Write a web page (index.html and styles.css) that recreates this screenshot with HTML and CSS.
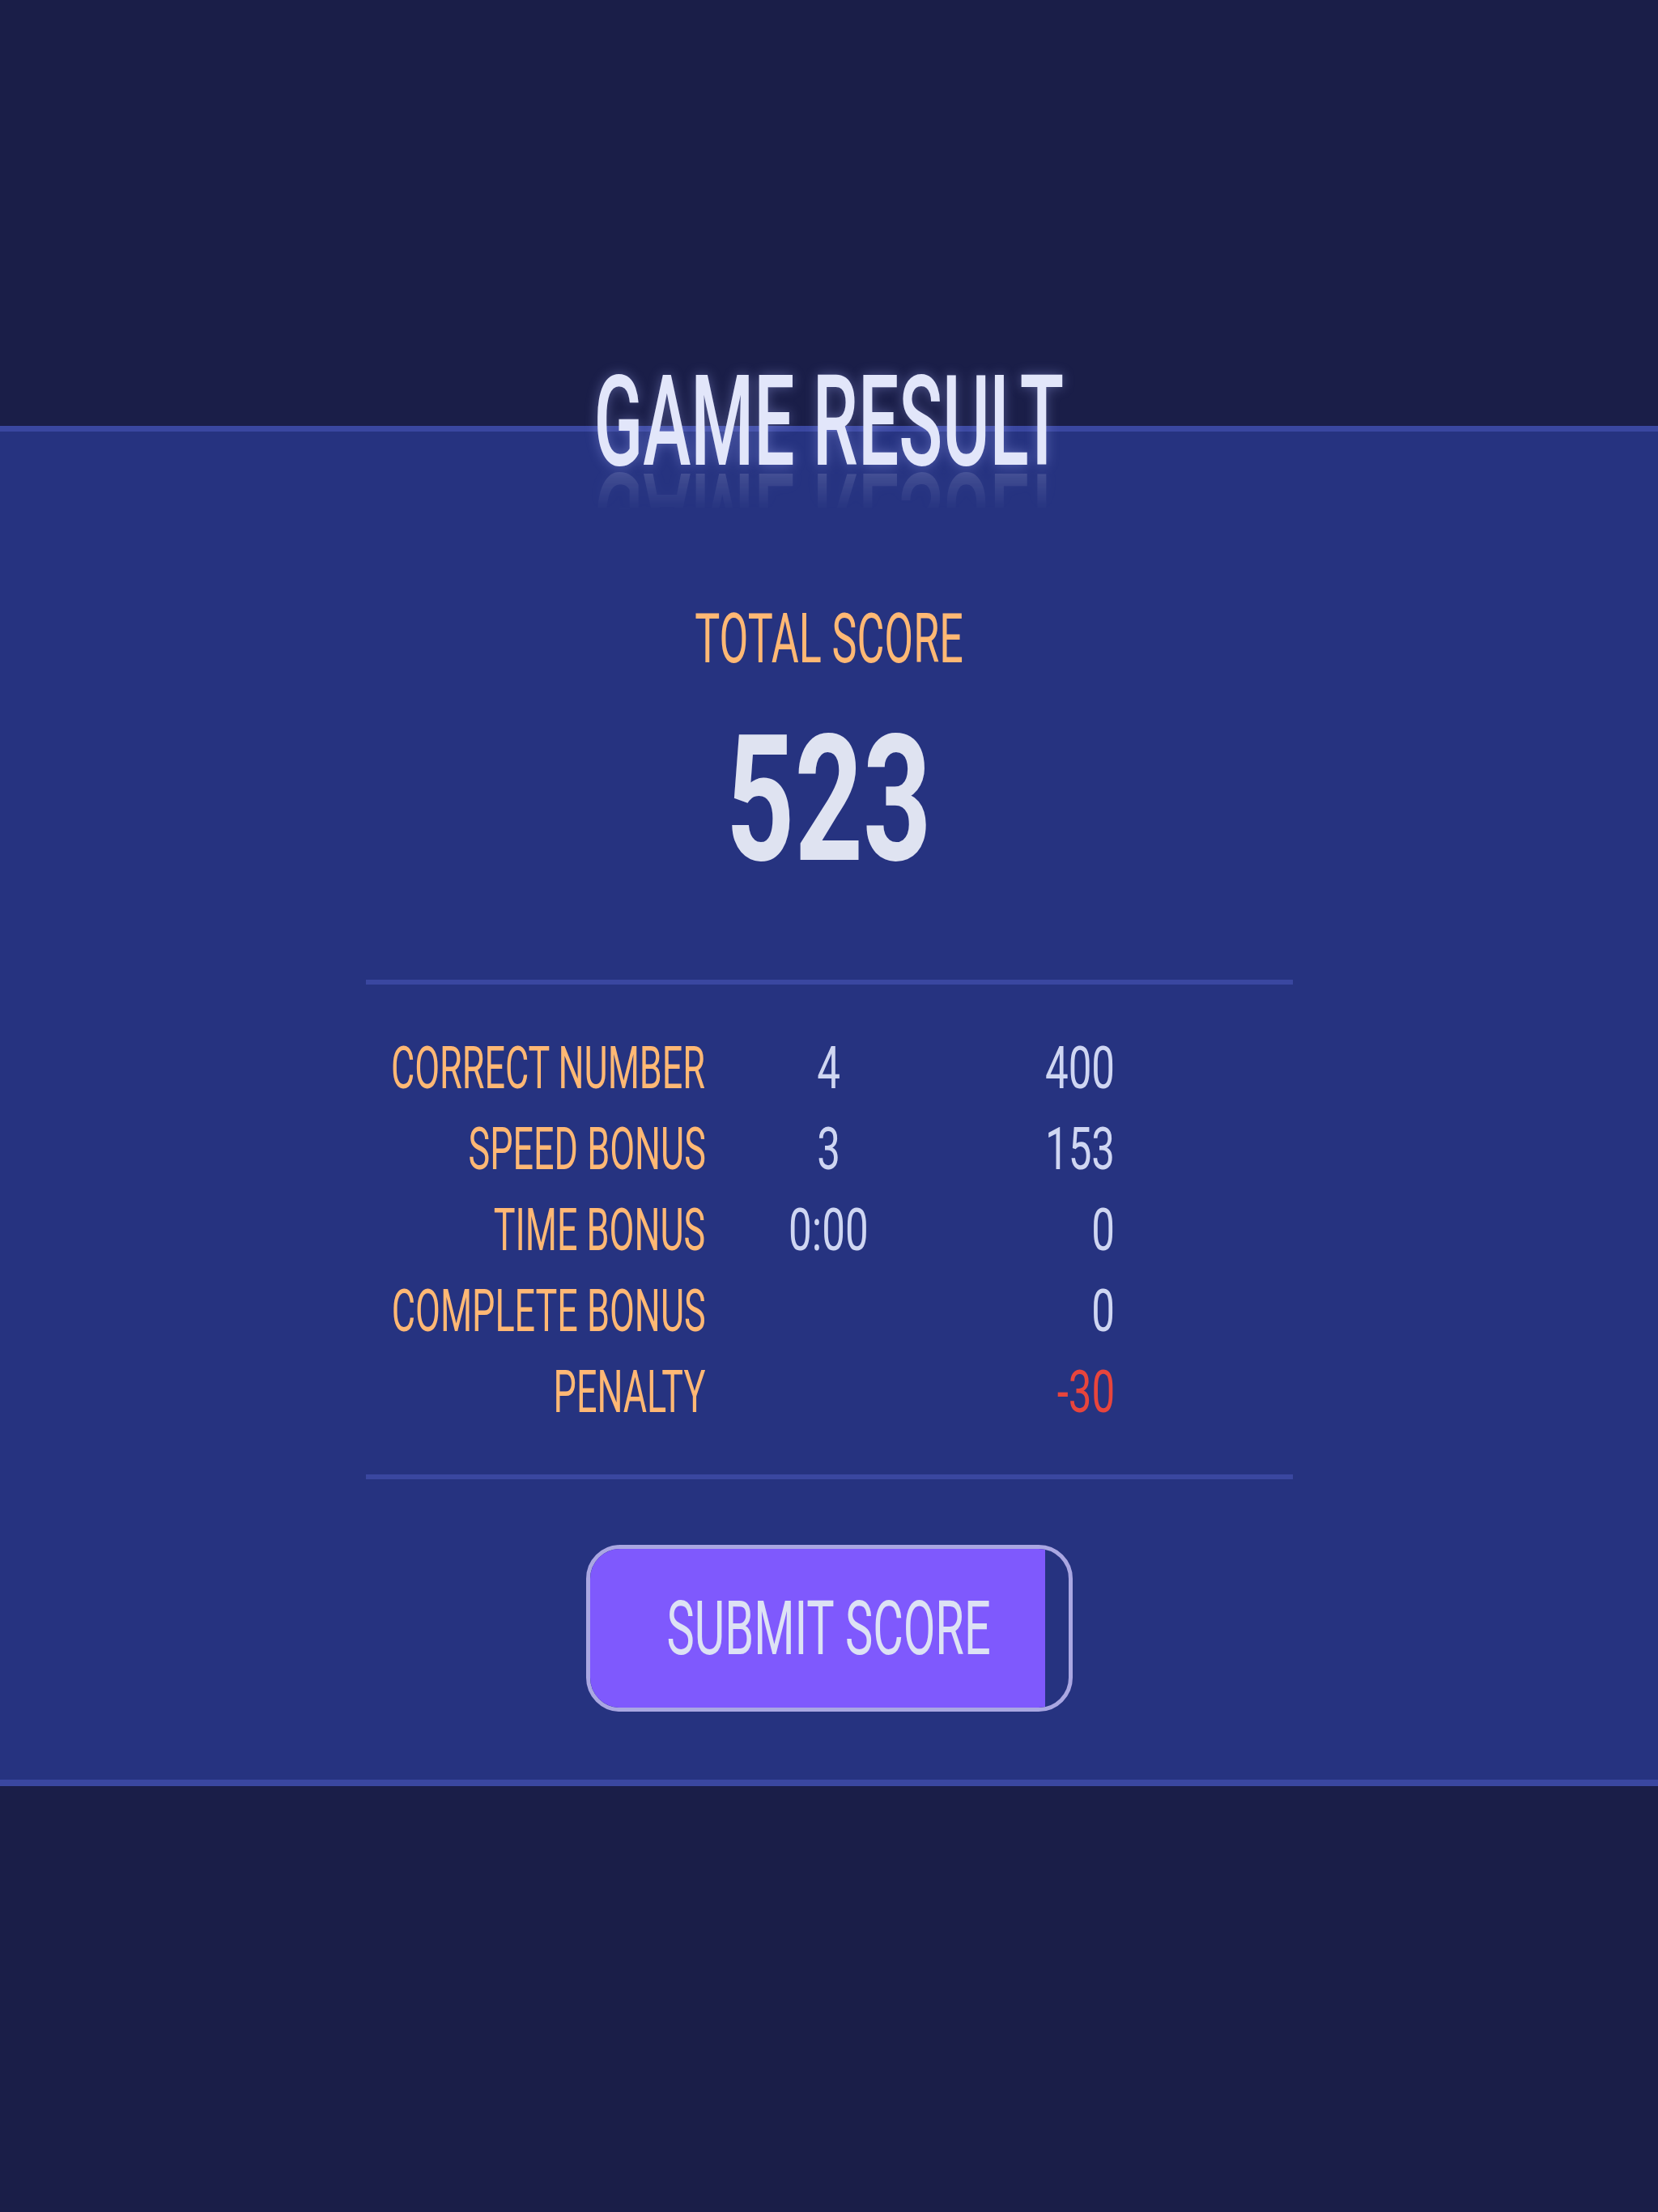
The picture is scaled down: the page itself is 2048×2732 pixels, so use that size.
FILE: index.html
```html
<!DOCTYPE html>
<html lang="en">
<head>
    <meta charset="UTF-8">
    <meta name="viewport" content="width=device-width, initial-scale=1.0">
    <title>Game Result</title>
    <link rel="stylesheet" href="styles.css">
</head>
<body>

    <section class="panel">
        <h1 class="title"><span class="squeeze">GAME RESULT</span></h1>

        <p class="total-label"><span class="squeeze">TOTAL SCORE</span></p>
        <p class="total-value"><span class="squeeze">523</span></p>

        <div class="breakdown">
            <div class="row">
                <span class="label"><span class="squeeze">CORRECT NUMBER</span></span>
                <span class="count"><span class="squeeze">4</span></span>
                <span class="points"><span class="squeeze">400</span></span>
            </div>
            <div class="row">
                <span class="label"><span class="squeeze">SPEED BONUS</span></span>
                <span class="count"><span class="squeeze">3</span></span>
                <span class="points"><span class="squeeze">153</span></span>
            </div>
            <div class="row">
                <span class="label"><span class="squeeze">TIME BONUS</span></span>
                <span class="count"><span class="squeeze">0:00</span></span>
                <span class="points"><span class="squeeze">0</span></span>
            </div>
            <div class="row">
                <span class="label"><span class="squeeze">COMPLETE BONUS</span></span>
                <span class="count"></span>
                <span class="points"><span class="squeeze">0</span></span>
            </div>
            <div class="row">
                <span class="label"><span class="squeeze">PENALTY</span></span>
                <span class="count"></span>
                <span class="points negative"><span class="squeeze">-30</span></span>
            </div>
        </div>

        <button type="button" class="submit">
            <span class="submit-fill"></span>
            <span class="submit-text"><span class="squeeze">SUBMIT SCORE</span></span>
        </button>
    </section>

</body>
</html>
```

FILE: styles.css
```css
body {
    font-family: Roboto, "Liberation Sans", sans-serif;
    margin: 0;
    padding: 0;
    display: flex;
    align-items: center;
    height: 100vh;
    background-color: #1a1e48;
}

/* condensed look: the display font is narrow, so squash a normal one */
.squeeze {
    display: inline-block;
    flex: none;
    transform: scaleX(0.61);
    white-space: nowrap;
}

.panel {
    width: 100%;
    box-sizing: border-box;
    background-color: #263380;
    border-top: 7px solid #3a47a0;
    border-bottom: 8px solid #3a47a0;
    padding-bottom: 84px;
    text-align: center;
}

.title {
    margin: -89px 0 0;
    font-size: 155px;
    line-height: 155px;
    font-weight: 500;
    color: #e2e6fa;
    text-shadow: 0 0 20px rgba(170, 180, 255, 0.38);
    -webkit-box-reflect: below -39px linear-gradient(transparent 55%, rgba(255, 255, 255, 0.24));
}

.title .squeeze {
    transform: scaleX(0.575);
}

.total-label {
    margin: 147px 0 0;
    font-size: 86px;
    line-height: 86px;
    font-weight: 400;
    color: #ffb874;
}

.total-label .squeeze {
    transform: scaleX(0.605);
}

.total-value {
    margin: 48px 0 0;
    font-size: 217px;
    line-height: 217px;
    font-weight: 700;
    color: #dfe3f1;
}

.total-value .squeeze {
    transform: scaleX(0.68);
}

.breakdown {
    width: 1145px;
    margin: 113px auto 0;
    padding: 53px 0 52px;
    border-top: 6px solid #3a47a0;
    border-bottom: 6px solid #3a47a0;
}

.row {
    display: grid;
    grid-template-columns: 420px 304px 202px 1fr;
    height: 100px;
    font-size: 73px;
    line-height: 100px;
    font-weight: 400;
}

.label,
.count,
.points {
    display: flex;
    min-width: 0;
}

.label {
    justify-content: flex-end;
    color: #ffb874;
}

.label .squeeze {
    transform: scaleX(0.615);
    transform-origin: right center;
}

.count {
    justify-content: center;
    color: #cfd6f2;
}

.count .squeeze {
    transform: scaleX(0.7);
}

.points {
    justify-content: flex-end;
    color: #cfd6f2;
}

.points .squeeze {
    transform: scaleX(0.7);
    transform-origin: right center;
}

.points.negative {
    color: #e8453c;
}

.submit {
    display: grid;
    width: 601px;
    height: 206px;
    margin: 81px auto 0;
    padding: 0;
    box-sizing: border-box;
    border: 5px solid #aaa7e2;
    border-radius: 42px;
    overflow: hidden;
    background-color: transparent;
    font-family: inherit;
    cursor: pointer;
}

.submit-fill {
    grid-area: 1 / 1;
    width: 562px;
    background-color: #7f59fd;
}

.submit-text {
    grid-area: 1 / 1;
    display: flex;
    justify-content: center;
    align-items: center;
    min-width: 0;
    font-size: 93px;
    line-height: 93px;
    font-weight: 400;
    color: #dde2f4;
}

.submit-text .squeeze {
    transform: scaleX(0.62);
}
```
